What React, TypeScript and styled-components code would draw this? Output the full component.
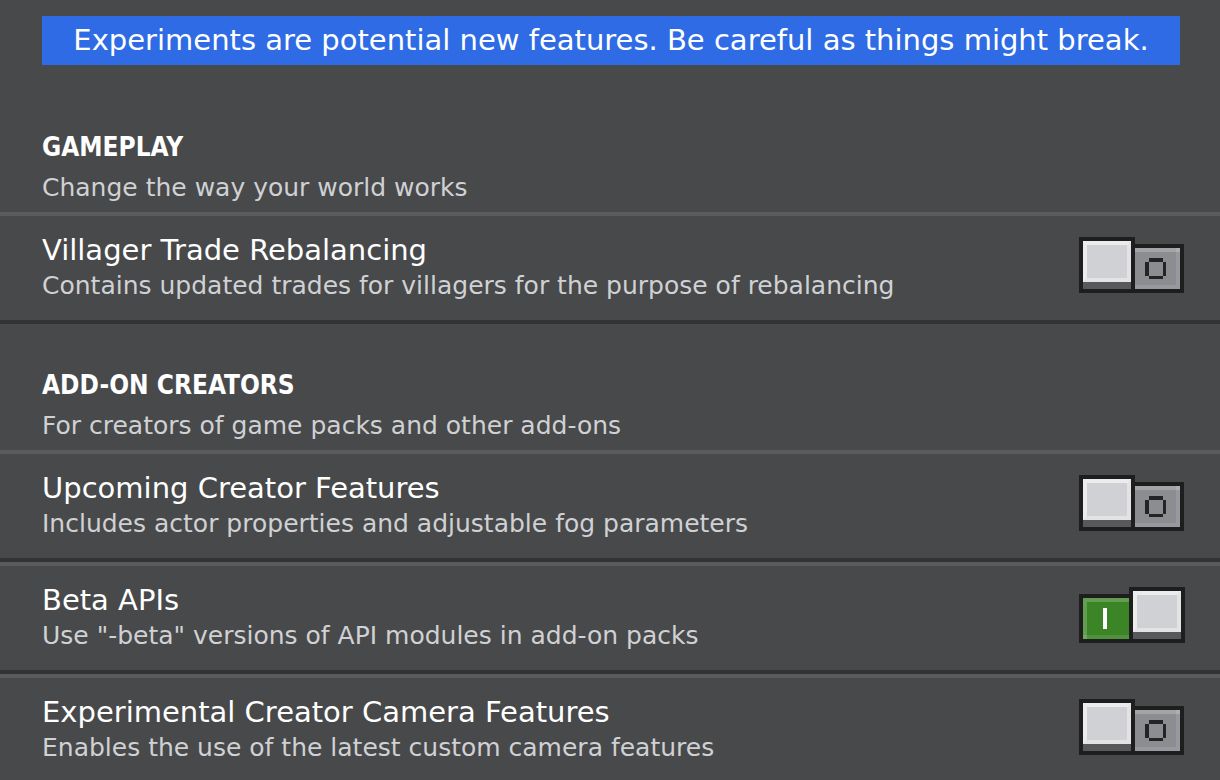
import React, { useState } from "react";
import styled, { createGlobalStyle } from "styled-components";

const GlobalStyle = createGlobalStyle`
  * { box-sizing: border-box; }
  body {
    margin: 0;
    background: #48494a;
    color: #ffffff;
    font-family: "DejaVu Sans", sans-serif;
    overflow-x: hidden;
  }
  h2, p { margin: 0; }
`;

const Page = styled.main`
  height: 100vh;
  overflow: hidden;
  padding-top: 16px;
`;

const Banner = styled.p`
  margin: 0 40px 21px 42px;
  background: #2e6be5;
  font-size: 29px;
  line-height: 49px;
  text-align: center;
  white-space: nowrap;
`;

const SectionHeader = styled.header`
  padding: 43px 42px 0;
  height: 126px;
`;

const SectionTitle = styled.h2`
  font-family: "DejaVu Sans Condensed", "DejaVu Sans", sans-serif;
  font-stretch: condensed;
  font-size: 26px;
  font-weight: 700;
  line-height: 36px;
  text-transform: uppercase;
`;

const Description = styled.p`
  color: #d0d1d4;
  font-size: 25px;
  line-height: 36px;
  white-space: nowrap;
`;

const SectionDescription = styled(Description)`
  line-height: 46px;
`;

const Row = styled.label`
  display: flex;
  justify-content: space-between;
  height: 112px;
  padding: 17px 35px 0 42px;
  border-top: 4px solid #5a5b5c;
  border-bottom: 4px solid #333334;
  cursor: pointer;
`;

const RowTitle = styled.p`
  font-size: 29px;
  line-height: 35px;
  white-space: nowrap;
`;

const Switch = styled.span`
  position: relative;
  display: flex;
  align-items: flex-end;
  width: 106px;
  height: 56px;
  margin-top: 4px;
  flex: none;
`;

const SwitchInput = styled.input`
  position: absolute;
  inset: 0;
  width: 100%;
  height: 100%;
  margin: 0;
  opacity: 0;
  cursor: pointer;
`;

const Knob = styled.span`
  width: 56px;
  height: 56px;
  border: 4px solid #1e1e1f;
  background: #58595a;
`;

const KnobFace = styled.span`
  display: block;
  height: 41px;
  background: #d0d1d4;
  border: 4px solid #ececed;
  border-right-color: #e3e3e5;
  border-bottom-color: #e3e3e5;
`;

const Track = styled.span<{ $on: boolean }>`
  display: flex;
  width: ${(p) => (p.$on ? 50 : 49)}px;
  height: 49px;
  border: 4px solid #1e1e1f;
  border-left-width: ${(p) => (p.$on ? 4 : 0)}px;
  border-right-width: ${(p) => (p.$on ? 0 : 4)}px;
`;

const Symbol = styled.svg`
  display: block;
`;

function TrackSymbol({ on }: { on: boolean }) {
  return on ? (
    <Symbol width="46" height="41" shapeRendering="crispEdges" aria-hidden="true">
      <path d="M0 0h46v41H0z" fill="#3c8527" />
      <path d="M0 0h46v4H0zM0 4h4v37H0z" fill="#639d52" />
      <path d="M4 37h42v4H4z" fill="#4f913c" />
      <path d="M0 37h4v4H0z" fill="#72a663" />
      <path d="M20 10h4v21h-4z" fill="#ffffff" />
    </Symbol>
  ) : (
    <Symbol width="45" height="41" shapeRendering="crispEdges" aria-hidden="true">
      <path d="M0 0h45v41H0z" fill="#8c8d90" />
      <path d="M0 0h45v4H0z" fill="#a3a4a6" />
      <path d="M41 4h4v37h-4zM0 37h41v4H0z" fill="#98999e" />
      <path d="M41 0h4v4h-4z" fill="#aeafb1" />
      <path d="M14 10h14v4H14zM10 14h4v14h-4zM28 14h3v14h-3zM14 28h14v3H14z" fill="#242425" />
    </Symbol>
  );
}

type Experiment = { title: string; description: string; enabled?: boolean };

function ExperimentRow({ title, description, enabled = false }: Experiment) {
  const [on, setOn] = useState(enabled);
  const track = (
    <Track $on={on}>
      <TrackSymbol on={on} />
    </Track>
  );
  return (
    <Row>
      <div>
        <RowTitle>{title}</RowTitle>
        <Description>{description}</Description>
      </div>
      <Switch>
        {on && track}
        <Knob>
          <KnobFace />
        </Knob>
        {!on && track}
        <SwitchInput type="checkbox" role="switch" checked={on} onChange={() => setOn(!on)} />
      </Switch>
    </Row>
  );
}

const sections: { title: string; description: string; items: Experiment[] }[] = [
  {
    title: "Gameplay",
    description: "Change the way your world works",
    items: [
      {
        title: "Villager Trade Rebalancing",
        description: "Contains updated trades for villagers for the purpose of rebalancing",
      },
    ],
  },
  {
    title: "Add-on creators",
    description: "For creators of game packs and other add-ons",
    items: [
      {
        title: "Upcoming Creator Features",
        description: "Includes actor properties and adjustable fog parameters",
      },
      {
        title: "Beta APIs",
        description: 'Use "-beta" versions of API modules in add-on packs',
        enabled: true,
      },
      {
        title: "Experimental Creator Camera Features",
        description: "Enables the use of the latest custom camera features",
      },
    ],
  },
];

export default function App() {
  return (
    <>
      <GlobalStyle />
      <Page>
        <Banner>Experiments are potential new features. Be careful as things might break.</Banner>
        {sections.map((section) => (
          <section key={section.title}>
            <SectionHeader>
              <SectionTitle>{section.title}</SectionTitle>
              <SectionDescription>{section.description}</SectionDescription>
            </SectionHeader>
            {section.items.map((item) => (
              <ExperimentRow key={item.title} {...item} />
            ))}
          </section>
        ))}
      </Page>
    </>
  );
}
